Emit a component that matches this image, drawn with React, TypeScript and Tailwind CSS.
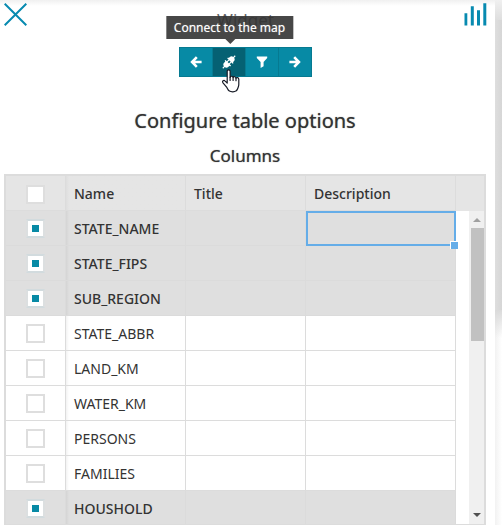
import React from "react";

type Column = { name: string; selected: boolean };

const columns: Column[] = [
  { name: "STATE_NAME", selected: true },
  { name: "STATE_FIPS", selected: true },
  { name: "SUB_REGION", selected: true },
  { name: "STATE_ABBR", selected: false },
  { name: "LAND_KM", selected: false },
  { name: "WATER_KM", selected: false },
  { name: "PERSONS", selected: false },
  { name: "FAMILIES", selected: false },
  { name: "HOUSHOLD", selected: true },
];

function CheckBox({ label, checked = false }: { label: string; checked?: boolean }) {
  return (
    <span className="relative mx-auto block size-[19px]">
      <input
        type="checkbox"
        aria-label={label}
        defaultChecked={checked}
        className="peer block size-full appearance-none border-2 border-[#dedede] bg-white checked:border-x-[#dcdfe0] checked:border-y-[#d2dbde]"
      />
      <span className="pointer-events-none absolute inset-[6px] hidden bg-[#078aa5] peer-checked:block" />
    </span>
  );
}

function ToolButton({ label, active = false, children }: { label: string; active?: boolean; children: React.ReactNode }) {
  return (
    <button
      type="button"
      aria-label={label}
      className={`-ml-px flex h-[30px] w-[34px] items-center justify-center border border-[#067a91] pb-px text-white ${
        active ? "bg-[#056173]" : "bg-[#078aa5]"
      }`}
    >
      {children}
    </button>
  );
}

function Arrow({ right = false }: { right?: boolean }) {
  return (
    <svg viewBox="0 0 12 12" className={`size-3 ${right ? "-scale-x-100" : ""}`} fill="none" stroke="currentColor" strokeWidth="2.6">
      <path d="M6.8 1.2 2.1 6l4.7 4.8M2.4 6H11.6" />
    </svg>
  );
}

function Plug() {
  return (
    <svg viewBox="0 0 14 14" className="size-[14px]" fill="currentColor">
      <g transform="rotate(45 7 7)">
        <path d="M6.4-1.8h1.2V.4c1.5.2 2.3 1.2 2.3 2.6v1.4h1v1.3H3.1V4.4h1V3c0-1.4.8-2.4 2.3-2.6z" />
        <path d="M4.9 5.4h1.2v3H4.9zM7.9 5.4h1.2v3H7.9z" />
        <path d="M3.1 8h7.8v1.3h-1V11c0 1.4-.8 2.4-2.3 2.6v2.2H6.4v-2.2C4.9 13.4 4.1 12.400 4.100 11V9.300h-1z" />
      </g>
    </svg>
  );
}

export default function App() {
  return (
    <div className="flex h-screen overflow-hidden bg-white font-['Noto_Sans','Open_Sans',sans-serif] text-[#333]">
      <main className="flex min-w-0 flex-1 flex-col bg-white bg-linear-to-b from-[#f0f0f0] to-white to-[6px]">
        <header className="flex h-[47px] shrink-0 items-start justify-between px-1">
          <button type="button" aria-label="Close" className="mt-[3px] text-[#078ab0]">
            <svg viewBox="0 0 23 23" className="size-[23px]" fill="none" stroke="currentColor" strokeWidth="2">
              <path d="m.7.7 21.6 21.6M22.3.7.7 22.3" />
            </svg>
          </button>
          <h1 className="mt-2 text-[17px] leading-6 text-[#666]">Widget</h1>
          <button type="button" aria-label="Chart" className="mt-[3px] mr-1 text-[#078ab0]">
            <svg viewBox="0 0 23 23" className="size-[23px]" fill="currentColor">
              <path d="M.5 10.2h2.8v12.3H.5zM6.8 3.2h3v19.3h-3zM13 7.2h3v15.3h-3zM19.3.3h3v22.2h-3z" />
            </svg>
          </button>
        </header>

        <nav aria-label="Widget steps" className="flex shrink-0 justify-center pr-1 pl-px">
          <ToolButton label="Back">
            <Arrow />
          </ToolButton>
          <div className="relative">
            <ToolButton label="Connect to the map" active>
              <Plug />
            </ToolButton>
            <div
              role="tooltip"
              className="absolute bottom-[38px] left-1/2 -translate-x-1/2 bg-[#333]/90 px-2 text-xs leading-[23px] whitespace-nowrap text-white [text-shadow:0_0_1px_#ffffff80]"
            >
              Connect to the map
              <span className="absolute top-full left-1/2 -ml-1 border-x-5 border-t-5 border-x-transparent border-t-[#484848]" />
            </div>
            <svg viewBox="0 0 18 24" className="pointer-events-none absolute top-[22px] left-[9px] z-10 h-6 w-[18px]" fill="#fff" stroke="#171b26" strokeWidth="1.2" strokeLinejoin="round" strokeLinecap="round">
              <path d="M5.2 14V2.3C5.2.4 8.1.4 8.1 2.3v6c.2-1.4 2.8-1.4 3 .2.4-1.2 2.8-1 2.9.7.5-1 2.7-.8 2.8 1v5c0 2-.4 2.5-1 4-.5 1.3-.5 1.7-1.8 2.7-1.3 1.2-5 1.2-6.6.2-1.3-.8-1.6-2-2.4-3.4L1 13.8c-1.2-1.8.8-3.1 2.2-1.7z" />
              <path d="M8.1 8.3v3.2M11.1 8.5v3M14 9.2v2.5" />
            </svg>
          </div>
          <ToolButton label="Filter">
            <svg viewBox="0 0 12 12" className="size-3" fill="currentColor">
              <path d="M.8.6h10.4v1.3L7.6 6v4.2L4.6 12V6L.8 1.9z" />
            </svg>
          </ToolButton>
          <ToolButton label="Next">
            <Arrow right />
          </ToolButton>
        </nav>

        <h2 className="mt-[30px] shrink-0 pr-[5px] text-center text-xl leading-7 font-normal [text-shadow:0_0_1px_#333333b0]">
          Configure table options
        </h2>
        <h3 className="mt-2 mb-[5px] shrink-0 pr-[5px] text-center text-[17px] leading-[26px] font-normal [text-shadow:0_0_1px_#333333b0]">
          Columns
        </h3>

        <div className="mr-[9px] -mb-px ml-1 flex min-h-0 flex-1 overflow-hidden border-2 border-[#dcdcdc]">
          <div className="min-w-0 flex-1">
            <table className="w-full table-fixed border-separate border-spacing-0 text-left text-sm">
              <colgroup>
                <col className="w-[60px]" />
                <col className="w-[120px]" />
                <col className="w-[120px]" />
                <col />
              </colgroup>
              <thead>
                <tr className="bg-[#e5e5e5] *:h-[35px] *:border-r *:border-b *:border-[#dcdcdc] *:py-0">
                  <th className="px-0">
                    <div className="pt-[2px]">
                      <CheckBox label="Select all columns" />
                    </div>
                  </th>
                  <th className="bg-linear-to-r from-[#dedede] to-[#e5e5e5] to-[3px] px-2 font-medium">
                    <span className="block pt-[2px]">Name</span>
                  </th>
                  <th className="px-2 font-medium">
                    <span className="block pt-[2px]">Title</span>
                  </th>
                  <th className="px-2 font-medium">
                    <span className="block pt-[2px]">Description</span>
                  </th>
                </tr>
              </thead>
              <tbody>
                {columns.map((column, i) => (
                  <tr
                    key={column.name}
                    className={`*:h-[35px] *:border-r *:border-b *:py-0 ${
                      column.selected ? "bg-[#dfdfdf] font-medium *:border-[#dbdbdb]" : "bg-white *:border-[#dcdcdc]"
                    }`}
                  >
                    <td className="px-0">
                      <CheckBox label={`Select ${column.name}`} checked={column.selected} />
                    </td>
                    <td className="bg-linear-to-r from-black/5 to-transparent to-[3px] px-2">
                      <span className="block pt-[2px]">{column.name}</span>
                    </td>
                    <td />
                    <td className="relative">
                      {i === 0 && (
                        <span className="absolute top-0 -right-px -bottom-px left-0 z-10 border-2 border-[#65ade8]">
                          <span className="absolute -right-1 -bottom-[5px] size-2 border-t border-l border-white bg-[#65ade8]" />
                        </span>
                      )}
                    </td>
                  </tr>
                ))}
              </tbody>
            </table>
          </div>
          <div className="flex w-7 shrink-0 flex-col">
            <div className="h-[35px] shrink-0 bg-[#e5e5e5]" />
            <div className="ml-[13px] flex min-h-0 flex-1 flex-col items-center bg-[#f0f0f0] py-[7px]">
              <span className="border-x-4 border-b-4 border-x-transparent border-b-[#a0a0a0]" />
              <span className="mt-[6px] ml-[2px] h-[113px] shrink-0 self-stretch bg-[#c1c1c1]" />
              <span className="mt-auto border-x-4 border-t-4 border-x-transparent border-t-[#505050]" />
            </div>
          </div>
        </div>
      </main>
      <aside className="flex w-[7px] shrink-0 flex-col bg-linear-to-r from-[#f2f2f2] to-white">
        <div className="h-5 bg-linear-to-b from-[#f0f0f0] to-[#dedede]" />
        <div className="h-[290px] bg-linear-to-r from-[#dedede] to-[#d6d6d6]" />
        <div className="h-7 bg-linear-to-b from-[#dadada] to-[#dadada]/0" />
      </aside>
    </div>
  );
}
